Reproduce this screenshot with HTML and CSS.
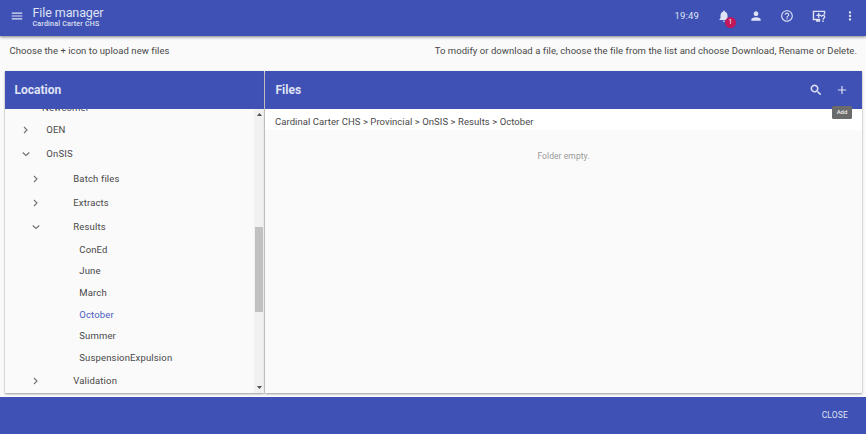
FILE: index.html
```html
<!DOCTYPE html>
<html lang="en">
<head>
<meta charset="utf-8">
<title>File manager</title>
<link rel="stylesheet" href="styles.css">
</head>
<body>
<header class="appbar">
  <svg class="icon menu" viewBox="0 0 24 24"><path d="M3 18h18v-2H3v2zm0-5h18v-2H3v2zm0-7v2h18V6H3z"/></svg>
  <div class="titles">
    <div class="title">File manager</div>
    <div class="subtitle">Cardinal Carter CHS</div>
  </div>
  <span class="clock">19:49</span>
  <div class="actions">
    <div class="bell">
      <svg class="icon" viewBox="0 0 24 24"><path d="M12 22c1.1 0 2-.9 2-2h-4c0 1.1.9 2 2 2zm6-6v-5c0-3.070-1.630-5.640-4.500-6.320V4c0-.83-.67-1.500-1.500-1.500s-1.500.67-1.500 1.500v.68C7.640 5.360 6 7.920 6 11v5l-2 2v1h16v-1l-2-2z"/></svg>
      <span class="badge">1</span>
    </div>
    <svg class="icon" viewBox="0 0 24 24"><path d="M12 12c2.210 0 4-1.790 4-4s-1.790-4-4-4-4 1.790-4 4 1.790 4 4 4zm0 2c-2.670 0-8 1.340-8 4v2h16v-2c0-2.660-5.330-4-8-4z"/></svg>
    <svg class="icon" viewBox="0 0 24 24"><path d="M11 18h2v-2h-2v2zm1-16C6.480 2 2 6.480 2 12s4.480 10 10 10 10-4.480 10-10S17.520 2 12 2zm0 18c-4.410 0-8-3.590-8-8s3.590-8 8-8 8 3.590 8 8-3.590 8-8 8zm0-14c-2.210 0-4 1.790-4 4h2c0-1.100.9-2 2-2s2 .9 2 2c0 2-3 1.750-3 5h2c0-2.250 3-2.500 3-5 0-2.210-1.790-4-4-4z"/></svg>
    <svg class="icon" viewBox="0 0 24 24"><g fill="none" stroke="currentColor" stroke-width="2.400"><path d="M21.500 9.500V4h-19v14H14M7 20.500h7M11.500 7v8M7.500 11h8"/><path d="M16.500 13.500a2.600 2.600 0 1 1 4.400 1.700c-1 .9-1.900 1.500-1.900 3.300"/></g><path d="M17.800 19.800h2.400v2.400h-2.400z"/></svg>
    <svg class="icon" viewBox="0 0 24 24"><path d="M12 8c1.100 0 2-.9 2-2s-.9-2-2-2-2 .9-2 2 .9 2 2 2zm0 2c-1.100 0-2 .9-2 2s.9 2 2 2 2-.9 2-2-.9-2-2-2zm0 6c-1.100 0-2 .9-2 2s.9 2 2 2 2-.9 2-2-.9-2-2-2z"/></svg>
  </div>
</header>
<div class="hints">
  <span>Choose the + icon to upload new files</span>
  <span>To modify or download a file, choose the file from the list and choose Download, Rename or Delete.</span>
</div>
<main class="panels">
  <section class="panel">
    <h2 class="panel-head">Location</h2>
    <div class="tree-wrap">
      <ul class="tree">
        <li class="leaf top">Newcomer</li>
        <li class="node"><svg class="chev" viewBox="0 0 10 10"><path d="M3 2 6 5 3 8"/></svg>OEN</li>
        <li class="node"><svg class="chev" viewBox="0 0 10 10"><path d="M1.700 3.500 5 6.500 8.300 3.500"/></svg>OnSIS</li>
        <li class="node sub"><svg class="chev" viewBox="0 0 10 10"><path d="M3 2 6 5 3 8"/></svg>Batch files</li>
        <li class="node sub"><svg class="chev" viewBox="0 0 10 10"><path d="M3 2 6 5 3 8"/></svg>Extracts</li>
        <li class="node sub"><svg class="chev" viewBox="0 0 10 10"><path d="M1.700 3.500 5 6.500 8.300 3.500"/></svg>Results</li>
        <li class="leaf">ConEd</li>
        <li class="leaf">June</li>
        <li class="leaf">March</li>
        <li class="leaf selected">October</li>
        <li class="leaf">Summer</li>
        <li class="leaf">SuspensionExpulsion</li>
        <li class="node sub"><svg class="chev" viewBox="0 0 10 10"><path d="M3 2 6 5 3 8"/></svg>Validation</li>
      </ul>
      <div class="scrollbar">
        <svg class="arrow" viewBox="0 0 5 3"><path d="M0 3 2.500 0 5 3z"/></svg>
        <div class="thumb"></div>
        <svg class="arrow" viewBox="0 0 5 3"><path d="M0 0 2.500 3 5 0z"/></svg>
      </div>
    </div>
  </section>
  <section class="panel">
    <div class="panel-head">
      <h2>Files</h2>
      <svg class="icon" viewBox="0 0 24 24"><path stroke="currentColor" stroke-width=".7" d="M15.500 14h-.79l-.28-.27C15.410 12.590 16 11.110 16 9.500 16 5.910 13.090 3 9.500 3S3 5.910 3 9.500 5.910 16 9.500 16c1.610 0 3.090-.59 4.230-1.570l.27.28v.79l5 4.990L20.490 19l-4.990-5zm-6 0C7.010 14 5 11.990 5 9.500S7.010 5 9.500 5 14 7.010 14 9.500 11.990 14 9.500 14z"/></svg>
      <div class="add">
        <svg class="icon" viewBox="0 0 24 24"><path d="M19 13h-6v6h-2v-6H5v-2h6V5h2v6h6v2z"/></svg>
        <span class="tooltip">Add</span>
      </div>
    </div>
    <div class="crumbs">Cardinal Carter CHS &gt; Provincial &gt; OnSIS &gt; Results &gt; October</div>
    <p class="empty">Folder empty.</p>
  </section>
</main>
<footer class="footer"><span>CLOSE</span></footer>
</body>
</html>
```
FILE: styles.css
```css
* { box-sizing: border-box; }
body {
  margin: 0;
  height: 434px;
  display: flex;
  flex-direction: column;
  overflow: hidden;
  background: #fafafa;
  color: #484848;
  font: 9.5px/12px Roboto, sans-serif;
  letter-spacing: .15px;
}
h2, p, ul { margin: 0; padding: 0; }
.icon { width: 14px; height: 14px; fill: currentColor; display: block; flex: none; }
.appbar {
  height: 35.500px;
  flex: none;
  display: flex;
  align-items: center;
  padding: 0 9px 3px 10px;
  background: #3f51b5;
  color: #dfe2f3;
  box-shadow: 0 1px 3px rgba(0,0,0,.5);
}
.titles { margin-left: 8.500px; flex: 1; white-space: nowrap; }
.title { font-size: 12.500px; line-height: 14px; margin-top: 1px; letter-spacing: -.09px; }
.subtitle { font-size: 7px; line-height: 8px; font-weight: 500; letter-spacing: .22px; }
.clock { margin-right: 18px; font-size: 9.500px; }
.actions { display: flex; gap: 17.500px; }
.bell { position: relative; }
.badge {
  position: absolute;
  left: 8px;
  top: 8px;
  width: 11px;
  height: 11px;
  border-radius: 50%;
  background: #c2185b;
  color: #fff;
  font-size: 6.500px;
  line-height: 11px;
  text-align: center;
}
.hints { height: 35.500px; flex: none; display: flex; justify-content: space-between; padding: 9.500px 9px 0 9.500px; letter-spacing: .055px; }
.panels { height: 320px; flex: none; display: grid; grid-template-columns: 259px 597px; gap: 1px; padding: 0 4px 0 5px; }
.panel { display: flex; flex-direction: column; min-width: 0; box-shadow: 0 1px 2px rgba(0,0,0,.4); background: #fafafa; }
.panel-head {
  height: 38px;
  flex: none;
  display: flex;
  align-items: center;
  padding: 0 13px 0 10.500px;
  background: #3f51b5;
  color: #dfe2f3;
}
.panel-head, .panel-head h2 { font-size: 12px; font-weight: 700; letter-spacing: 0; }
h2.panel-head { padding-left: 9.500px; }
.panel-head h2 { flex: 1; }
.add { position: relative; margin-left: 12px; }
.tooltip {
  position: absolute;
  left: -3px;
  top: 23px;
  width: 20px;
  height: 13px;
  border-radius: 1.500px;
  background: #6b6b6b;
  color: #eee;
  font-size: 6px;
  font-weight: 500;
  line-height: 12px;
  text-align: center;
}
.tree-wrap { display: flex; flex: 1; min-height: 0; overflow: hidden; }
.tree { flex: 1; list-style: none; margin-top: -12.300px; }
.node, .leaf { display: flex; align-items: center; }
.node { height: 24.100px; padding-left: 16.300px; }
.leaf { height: 21.650px; padding-left: 74.300px; }
.leaf.top { padding: 1px 0 0 37px; }
.node.sub { padding-left: 26px; }
.chev { width: 10px; height: 10px; margin-right: 15px; fill: none; stroke: #707070; stroke-width: 1.100; }
.sub .chev { margin-right: 32.300px; }
.selected { color: #4a5bba; }
.scrollbar { width: 10px; background: #f1f1f1; display: flex; flex-direction: column; align-items: center; padding: 4px 0; }
.arrow { width: 5px; height: 3px; flex: none; fill: #505050; }
.thumb { width: 8px; height: 85px; margin: 111px 0 auto; background: #c1c1c1; }
.crumbs { height: 21px; flex: none; padding: 6.500px 10px 0; background: #fff; letter-spacing: .06px; }
.empty { margin-top: 20px; text-align: center; color: #999; font-size: 8.500px; letter-spacing: .08px; }
.footer {
  height: 37.500px;
  margin-top: auto;
  flex: none;
  display: flex;
  align-items: center;
  justify-content: flex-end;
  padding-right: 18px;
  background: #3f51b5;
  color: #dfe2f3;
  font-size: 8.500px;
}
```
